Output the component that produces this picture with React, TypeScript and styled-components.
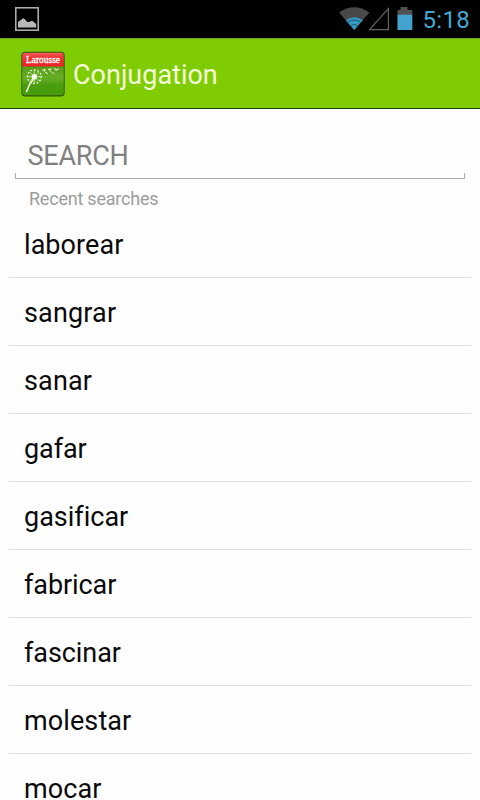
import React from "react";
import styled, { createGlobalStyle } from "styled-components";

const GlobalStyle = createGlobalStyle`
  * { box-sizing: border-box; }
  html, body { margin: 0; padding: 0; background: #fefefe; overflow: hidden; }
  body { font-family: Roboto, "Liberation Sans", sans-serif; }
`;

const Screen = styled.div`
  width: 480px;
  height: 800px;
  overflow: hidden;
  display: flex;
  flex-direction: column;
  background: #fefefe;
`;

const StatusBar = styled.header`
  flex: none;
  height: 38px;
  padding: 0 10px 0 15px;
  display: flex;
  align-items: flex-start;
  justify-content: space-between;
  background: #000;
`;

const PictureIcon = styled.svg`
  width: 24px;
  height: 24px;
  margin-top: 7px;
`;

const StatusIcons = styled.div`
  display: flex;
  align-items: flex-start;
`;

const Indicators = styled.svg`
  width: 78px;
  height: 38px;
  margin-right: 6px;
`;

const Clock = styled.time`
  font-size: 24px;
  line-height: 40px;
  letter-spacing: 0.3px;
  color: #42a8d2;
`;

const ActionBar = styled.div`
  flex: none;
  height: 71px;
  padding: 0 21px;
  display: flex;
  align-items: center;
  gap: 8px;
  background: #7fcc02;
  border-top: 1px solid #6da42a;
  border-bottom: 1px solid #1c3d00;
`;

const AppIcon = styled.svg`
  width: 44px;
  height: 46px;
`;

const Title = styled.h1`
  margin: 0;
  padding-top: 2px;
  font-size: 27px;
  font-weight: 400;
  line-height: 36px;
  letter-spacing: 0;
  color: #f3ffd9;
`;

const SearchField = styled.div`
  flex: none;
  height: 70px;
  padding: 29px 12.5px 0;
  margin: 0 15px;
  font-size: 27px;
  line-height: 36px;
  letter-spacing: -0.25px;
  color: #808080;
  background:
    linear-gradient(#aaa, #aaa) left bottom / 1px 6px no-repeat,
    linear-gradient(#aaa, #aaa) right bottom / 1px 6px no-repeat,
    linear-gradient(#aaa, #aaa) left bottom / 100% 1px no-repeat;
`;

const Caption = styled.div`
  flex: none;
  height: 31px;
  padding: 8px 29px 0;
  font-size: 18px;
  line-height: 24px;
  letter-spacing: -0.22px;
  color: #9c9c9c;
`;

const WordList = styled.ul`
  flex: none;
  margin: 0 9px;
  padding: 0;
  list-style: none;
`;

const WordRow = styled.li<{ $spacing: number }>`
  height: 68px;
  padding: 17px 15px 0;
  border-bottom: 1px solid #dfdfdf;
  font-size: 27px;
  line-height: 36px;
  letter-spacing: ${(p) => p.$spacing}px;
  font-variant-ligatures: none;
  color: #0a0a0a;
`;

const words = [
  { text: "laborear", spacing: 0.06 },
  { text: "sangrar", spacing: 0.15 },
  { text: "sanar", spacing: 0.15 },
  { text: "gafar", spacing: -0.1 },
  { text: "gasificar", spacing: 0 },
  { text: "fabricar", spacing: -0.08 },
  { text: "fascinar", spacing: -0.08 },
  { text: "molestar", spacing: 0.1 },
  { text: "mocar", spacing: 0.1 },
];

function LarousseIcon() {
  return (
    <AppIcon viewBox="0 0 44 46">
      <defs>
        <linearGradient id="leaf" x1="0" y1="0" x2="0" y2="1">
          <stop offset="0" stopColor="#559a18" />
          <stop offset="0.4" stopColor="#66ae24" />
          <stop offset="0.65" stopColor="#499d0d" />
          <stop offset="1" stopColor="#479c0a" />
        </linearGradient>
        <linearGradient id="banner" x1="0" y1="0" x2="0" y2="1">
          <stop offset="0" stopColor="#f86b69" />
          <stop offset="0.3" stopColor="#ef3b3b" />
          <stop offset="1" stopColor="#e92328" />
        </linearGradient>
        <clipPath id="tile">
          <rect x="1.2" y="1.7" width="41.6" height="42.6" rx="3" />
        </clipPath>
      </defs>
      <rect x="0.3" y="0.8" width="43.4" height="44.7" rx="3.8" fill="#315508" />
      <g clipPath="url(#tile)">
        <rect x="1" y="15" width="42" height="30" fill="url(#leaf)" />
        <rect x="1" y="1" width="42" height="14.5" fill="url(#banner)" />
      </g>
      <text x="22" y="11.8" textAnchor="middle" textLength="34" fontFamily="Liberation Serif, serif" fontWeight="400" fontSize="9.3" fill="#fff" stroke="#fff" strokeWidth="0.3">
        Larousse
      </text>
      <g fill="none" stroke="#f6ffe8" strokeLinecap="round">
        <path d="M5.6 40.5Q8 33 13.2 27" strokeWidth="1.6" />
        <circle cx="13.3" cy="25.7" r="6.9" strokeWidth="1.4" strokeDasharray="0.6 3" />
        <path
          d="M13.3 19.5v4M13.3 28v4M7 25.7h4M15.6 25.7h4M8.9 21.3l2.8 2.8M14.9 27.3l2.8 2.8M8.9 30.1l2.8-2.8M14.9 24.1l2.8-2.8"
          strokeWidth="0.6"
        />
        <path
          d="M21.5 19l3-.2M23 18.7l.6 1.8M24.5 21.5l2 1M27.5 18.5l3-.7M28.5 18.3l1 2.4M31 21.5l2 1M33.5 17l1.8 2.2M34 19l3.6-1"
          strokeWidth="0.9"
        />
      </g>
      <circle cx="13.3" cy="25.7" r="2.7" fill="#fafff0" />
    </AppIcon>
  );
}

export default function App() {
  return (
    <>
      <GlobalStyle />
      <Screen>
        <StatusBar>
          <PictureIcon viewBox="0 0 24 24">
            <rect x="0.8" y="0.8" width="22.4" height="22.4" fill="none" stroke="#b4b4b4" strokeWidth="1.5" />
            <path d="M3 20.5V15l3.5-2.6L8 11.3l1.6.6L12.2 15h2.3l1.5-.9h1.6l3.6 2.8v3.6z" fill="#b8b8b8" />
          </PictureIcon>
          <StatusIcons>
            <Indicators viewBox="0 0 78 38">
              <path d="M0 12.6Q15 1.8 30.5 12.6L15.2 30z" fill="#484848" />
              <path d="M6.8 20.2Q15.2 14.5 23.7 20.2L15.2 30z" fill="#3599c4" />
              <path d="M8.8 22.2Q15.2 17.8 21.6 22.2M11.6 25.6q3.6-2.6 7.2 0" fill="none" stroke="#1b556e" strokeWidth="1" />
              <path d="M30.5 29.7H49.4V8.5z" fill="none" stroke="#636363" strokeWidth="1.2" />
              <path d="M58.5 10h3V7h7v3h4.8v5H58.5z" fill="#505050" />
              <rect x="58.5" y="14.7" width="14.8" height="15.3" fill="#42a3ce" />
            </Indicators>
            <Clock>5:18</Clock>
          </StatusIcons>
        </StatusBar>
        <ActionBar>
          <LarousseIcon />
          <Title>Conjugation</Title>
        </ActionBar>
        <SearchField>SEARCH</SearchField>
        <Caption>Recent searches</Caption>
        <WordList>
          {words.map((w) => (
            <WordRow key={w.text} $spacing={w.spacing}>
              {w.text}
            </WordRow>
          ))}
        </WordList>
      </Screen>
    </>
  );
}
